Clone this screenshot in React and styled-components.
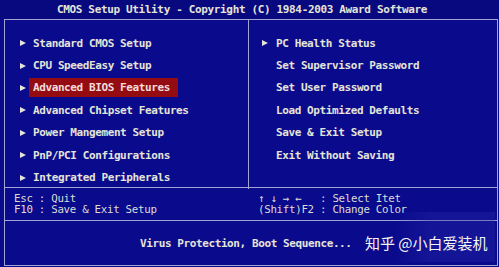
import React from "react";
import styled, { createGlobalStyle } from "styled-components";

const GlobalStyle = createGlobalStyle`
  html, body {
    margin: 0;
    padding: 0;
    background: #0a0a8c;
    overflow: hidden;
  }
`;

const Screen = styled.div`
  position: relative;
  width: 499px;
  height: 267px;
  background: #0a0a8c;
  display: flex;
  flex-direction: column;
  color: #e4e4d8;
  font-family: "DejaVu Sans Mono", "Liberation Mono", monospace;
  overflow: hidden;
`;

const Title = styled.div`
  height: 19px;
  display: flex;
  align-items: center;
  padding-left: 57px;
  font-size: 11px;
  font-weight: bold;
  letter-spacing: -0.35px;
  white-space: pre;
  background: #08087f;
`;

const Frame = styled.div`
  flex: 1;
  margin: 0 1px 1px 4px;
  border: 1px solid #a4a4d4;
  display: flex;
  flex-direction: column;
`;

const MenuGrid = styled.div`
  height: 167px;
  border-bottom: 1px solid #a4a4d4;
  display: grid;
  grid-template-columns: 244px 1fr;
`;

const Column = styled.ul`
  list-style: none;
  margin: 0;
  padding: 12px 0 0 ${(p) => p.$indent}px;
  border-right: ${(p) => (p.$divider ? "1px solid #a4a4d4" : "none")};
`;

const Item = styled.li`
  height: 22.4px;
  display: flex;
  align-items: center;
`;

const Arrow = styled.span`
  width: 0;
  height: 0;
  border-left: 6px solid #e4e4d8;
  border-top: 3.5px solid transparent;
  border-bottom: 3.5px solid transparent;
  margin-right: ${(p) => p.$gap}px;
  visibility: ${(p) => (p.$show ? "visible" : "hidden")};
`;

const Label = styled.span`
  height: 19px;
  display: flex;
  align-items: center;
  padding: 0 8px 0 4px;
  font-size: 11px;
  font-weight: bold;
  letter-spacing: -0.4px;
  white-space: pre;
  background: ${(p) => (p.$active ? "#940c12" : "transparent")};
  color: ${(p) => (p.$active ? "#f2dcdc" : "#e4e4d8")};
`;

const Footer = styled.div`
  height: 33px;
  box-sizing: border-box;
  border-bottom: 1px solid #a4a4d4;
  display: grid;
  grid-template-columns: 245px 1fr;
  padding-top: 5px;
`;

const Keys = styled.div`
  padding-left: ${(p) => p.$indent}px;
  font-size: 10.8px;
  line-height: 11px;
  letter-spacing: -0.3px;
  white-space: pre;
  color: #dcdcd4;
`;

const Status = styled.div`
  flex: 1;
  display: flex;
  align-items: center;
  padding-left: 135px;
  font-size: 11px;
  font-weight: bold;
  letter-spacing: -0.4px;
  white-space: pre;
`;

const Shade = styled.div`
  position: absolute;
  left: 395px;
  top: 212px;
  width: 100px;
  height: 50px;
  background: linear-gradient(90deg, rgba(40, 40, 170, 0) 0%, rgba(40, 40, 170, 0.35) 35%, rgba(40, 40, 170, 0.35) 100%);
`;

const Watermark = styled.div`
  position: absolute;
  left: 365px;
  top: 233px;
  font-family: "Noto Sans CJK SC", "Noto Sans", sans-serif;
  font-size: 15px;
  line-height: 20px;
  color: #f4f4f4;
  white-space: pre;
`;

const leftItems = [
  { text: "Standard CMOS Setup" },
  { text: "CPU SpeedEasy Setup" },
  { text: "Advanced BIOS Features", active: true },
  { text: "Advanced Chipset Features" },
  { text: "Power Mangement Setup" },
  { text: "PnP/PCI Configurations" },
  { text: "Integrated Peripherals" },
];

const rightItems = [
  { text: "PC Health Status", arrow: true },
  { text: "Set Supervisor Password" },
  { text: "Set User Password" },
  { text: "Load Optimized Defaults" },
  { text: "Save & Exit Setup" },
  { text: "Exit Without Saving" },
];

export default function App() {
  return (
    <>
      <GlobalStyle />
      <Screen>
        <Title>CMOS Setup Utility - Copyright (C) 1984-2003 Award Software</Title>
        <Frame>
          <MenuGrid>
            <Column $indent={15} $divider>
              {leftItems.map((it) => (
                <Item key={it.text}>
                  <Arrow $show $gap={3} />
                  <Label $active={it.active}>{it.text}</Label>
                </Item>
              ))}
            </Column>
            <Column $indent={13}>
              {rightItems.map((it) => (
                <Item key={it.text}>
                  <Arrow $show={it.arrow} $gap={4} />
                  <Label>{it.text}</Label>
                </Item>
              ))}
            </Column>
          </MenuGrid>
          <Footer>
            <Keys $indent={9}>{"Esc : Quit\nF10 : Save & Exit Setup"}</Keys>
            <Keys $indent={8}>{"↑ ↓ → ←   : Select Itet\n(Shift)F2 : Change Color"}</Keys>
          </Footer>
          <Status>Virus Protection, Boot Sequence...</Status>
        </Frame>
        <Shade />
        <Watermark>知乎 @小白爱装机</Watermark>
      </Screen>
    </>
  );
}
